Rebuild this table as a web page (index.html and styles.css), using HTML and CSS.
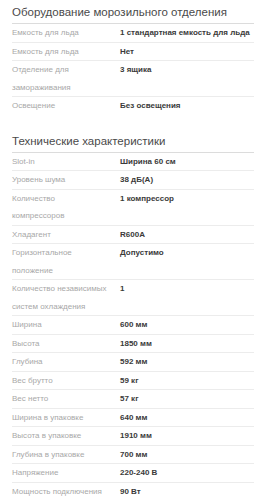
FILE: index.html
```html
<!DOCTYPE html>
<html lang="ru">
<head>
<meta charset="utf-8">
<link rel="stylesheet" href="styles.css">
</head>
<body>
<div class="page">
  <section class="section">
    <h2 class="title">Оборудование морозильного отделения</h2>
    <div class="row"><div class="label">Емкость для льда</div><div class="value">1 стандартная емкость для льда</div></div>
    <div class="row"><div class="label">Емкость для льда</div><div class="value">Нет</div></div>
    <div class="row"><div class="label">Отделение для замораживания</div><div class="value">3 ящика</div></div>
    <div class="row"><div class="label">Освещение</div><div class="value">Без освещения</div></div>
  </section>
  <section class="section">
    <h2 class="title">Технические характеристики</h2>
    <div class="row"><div class="label">Slot-in</div><div class="value">Ширина 60 см</div></div>
    <div class="row"><div class="label">Уровень шума</div><div class="value">38 дБ(А)</div></div>
    <div class="row"><div class="label">Количество компрессоров</div><div class="value">1 компрессор</div></div>
    <div class="row"><div class="label">Хладагент</div><div class="value">R600A</div></div>
    <div class="row"><div class="label">Горизонтальное положение</div><div class="value">Допустимо</div></div>
    <div class="row"><div class="label">Количество независимых систем охлаждения</div><div class="value">1</div></div>
    <div class="row"><div class="label">Ширина</div><div class="value">600 мм</div></div>
    <div class="row"><div class="label">Высота</div><div class="value">1850 мм</div></div>
    <div class="row"><div class="label">Глубина</div><div class="value">592 мм</div></div>
    <div class="row"><div class="label">Вес брутто</div><div class="value">59 кг</div></div>
    <div class="row"><div class="label">Вес нетто</div><div class="value">57 кг</div></div>
    <div class="row"><div class="label">Ширина в упаковке</div><div class="value">640 мм</div></div>
    <div class="row"><div class="label">Высота в упаковке</div><div class="value">1910 мм</div></div>
    <div class="row"><div class="label">Глубина в упаковке</div><div class="value">700 мм</div></div>
    <div class="row"><div class="label">Напряжение</div><div class="value">220-240 В</div></div>
    <div class="row"><div class="label">Мощность подключения</div><div class="value">90 Вт</div></div>
  </section>
</div>
</body>
</html>
```
FILE: styles.css
```css
html, body {
  margin: 0;
  padding: 0;
  background: #ffffff;
}
.page {
  padding-left: 12px;
  font-family: "Liberation Sans", Arial, sans-serif;
}
.section + .section {
  margin-top: 14px;
}
.title {
  margin: 0;
  padding: 3px 0 2px;
  font-size: 11.5px;
  line-height: 18px;
  font-weight: normal;
  color: #4a4a4a;
  border-bottom: 1px solid #dcdcdc;
}
.row {
  display: flex;
  font-size: 8px;
  line-height: 17.5px;
  border-bottom: 1px solid #ececec;
}
.row:last-child {
  border-bottom: none;
}
.label {
  flex: 0 0 97px;
  padding-right: 11px;
  color: #a8a8a8;
}
.value {
  flex: 1;
  font-weight: bold;
  color: #3a3a3a;
}
```
